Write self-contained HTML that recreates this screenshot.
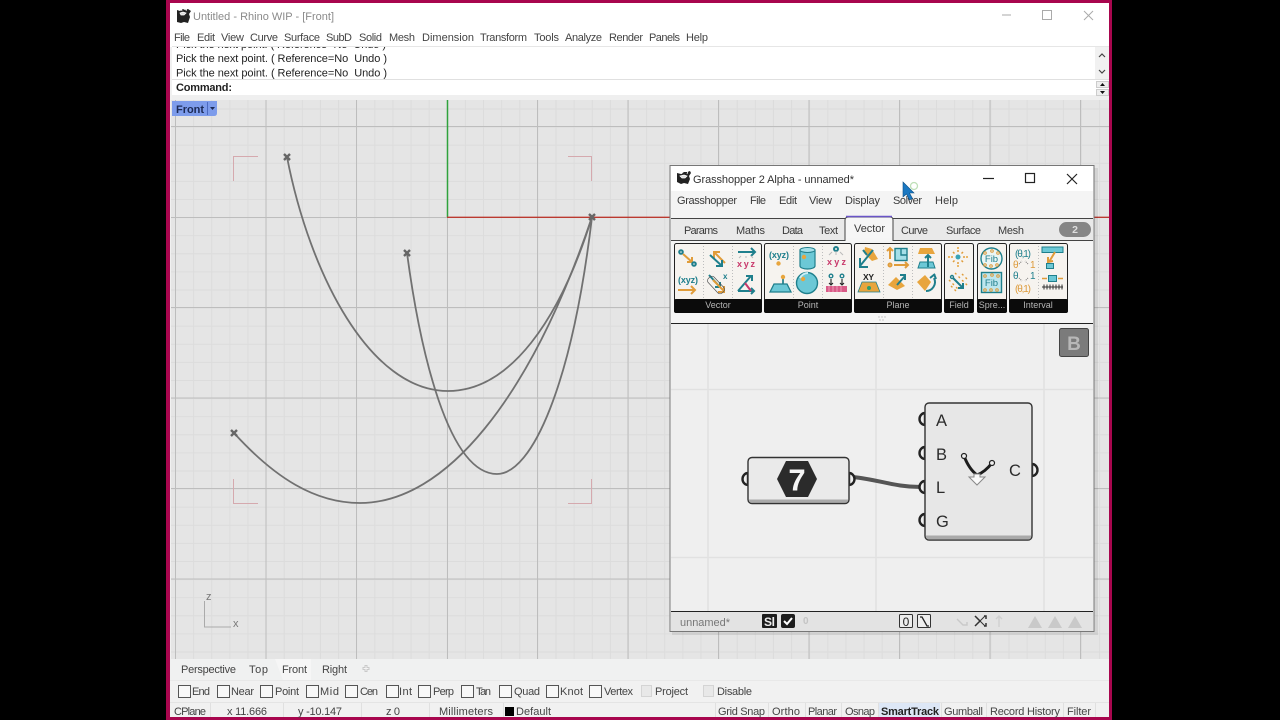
<!DOCTYPE html>
<html><head><meta charset="utf-8"><style>
html,body{margin:0;padding:0;background:#000;width:1280px;height:720px;overflow:hidden}
svg{display:block;position:absolute;left:0;top:0}
svg.root{filter:blur(.3px)}
text{font-family:"Liberation Sans",sans-serif;font-size:11px;fill:#333;white-space:pre}
.g{fill:#8a8a8a}
.m{fill:#444}
.gh{fill:#3a3a3a;font-size:11px}
.w{fill:#b5b5b5;font-size:9px}
.t{fill:#1f7f8c;font-size:9px;font-weight:bold}
.o{fill:#dd9a3a;font-size:9px;font-weight:bold}
.p{fill:#c8376a;font-size:9px;font-weight:bold}
.pin{fill:#efefef;stroke:#222;stroke-width:2.4}
.ct{fill:none;stroke:#1f7f8c;stroke-width:2}
.co{fill:none;stroke:#e09c3a;stroke-width:2}
.cp{fill:none;stroke:#c8376a;stroke-width:2}
.ft{fill:#1f7f8c}.fo{fill:#e8a53d}.fc{fill:#6cc8d6;stroke:#1f7f8c}
.big{font-size:16.500px;fill:#2b2b2b}
</style></head><body>
<svg class="root" width="1280" height="720" viewBox="0 0 1280 720">
<rect width="1280" height="720" fill="#000"/>
<rect x="166" y="0" width="946" height="720" fill="#a8064e"/>
<rect x="170" y="3" width="939" height="714" fill="#f1f1f1"/>
<rect x="170" y="3" width="939" height="44" fill="#fff"/>

<!-- title -->
<path d="M177 10l3 1 3-2 2 1 3-1 3 2-2 3 1 3-2 6-4-1-3 1-4-1z" fill="#222"/>
<path d="M180 13l3-1 3 1-2 2-3 0zM181 8l1 3M187 8l-1 3" stroke="#fff" stroke-width=".8" fill="#ddd"/>
<text class="g" x="193" y="20" textLength="141">Untitled - Rhino WIP - [Front]</text>
<g stroke="#aaa" stroke-width="1" fill="none">
<path d="M1002 15h9"/><rect x="1042.500" y="10.500" width="9" height="9"/><path d="M1084 11l9 9M1093 11l-9 9"/>
</g>
<!-- menu -->
<text class="m" x="174" y="41" textLength="16">File</text>
<text class="m" x="197" y="41" textLength="18">Edit</text>
<text class="m" x="221" y="41" textLength="23">View</text>
<text class="m" x="250" y="41" textLength="28">Curve</text>
<text class="m" x="284" y="41" textLength="36">Surface</text>
<text class="m" x="326" y="41" textLength="26">SubD</text>
<text class="m" x="359" y="41" textLength="23">Solid</text>
<text class="m" x="389" y="41" textLength="26">Mesh</text>
<text class="m" x="422" y="41" textLength="52">Dimension</text>
<text class="m" x="480" y="41" textLength="47">Transform</text>
<text class="m" x="534" y="41" textLength="25">Tools</text>
<text class="m" x="565" y="41" textLength="37">Analyze</text>
<text class="m" x="609" y="41" textLength="34">Render</text>
<text class="m" x="649" y="41" textLength="31">Panels</text>
<text class="m" x="686" y="41" textLength="22">Help</text>
<!-- command -->
<rect x="172" y="47" width="937" height="48" fill="#fff"/>
<rect x="172" y="46" width="937" height="1" fill="#e6e6e6"/>
<svg x="172" y="47" width="920" height="32"><text x="4" y="1" textLength="210" style="fill:#222">Pick the next point. ( Reference=No  Undo )</text></svg>
<text x="176" y="62" textLength="211" style="fill:#222">Pick the next point. ( Reference=No  Undo )</text>
<text x="176" y="76.500" textLength="211" style="fill:#222">Pick the next point. ( Reference=No  Undo )</text>
<rect x="172" y="79" width="937" height="1" fill="#e0e0e0"/>
<text x="176" y="91" textLength="56" style="font-weight:bold;fill:#222">Command:</text>
<rect x="172" y="95" width="937" height="5" fill="#efefef"/>
<rect x="1095" y="47" width="14" height="32" fill="#f1f1f1"/>
<path d="M1099 57l3-3 3 3M1099 70l3 3 3-3" fill="none" stroke="#444" stroke-width="1.200"/>
<rect x="1096.500" y="81.500" width="12" height="6" fill="#eee" stroke="#ccc"/><rect x="1096.500" y="89.500" width="12" height="6" fill="#eee" stroke="#ccc"/>
<path d="M1100 86l2.500-3 2.500 3zM1100 91l2.500 3 2.500-3z" fill="#111"/>

<!-- viewport -->
<rect x="171" y="100" width="938" height="559" fill="#e5e5e5"/>
<defs>
<pattern id="mn" x="175" y="108.500" width="18.120" height="18.100" patternUnits="userSpaceOnUse">
<path d="M0.500 0V18.100M0 .5H18.120" stroke="#dcdcdc" stroke-width="1" fill="none"/>
</pattern>
</defs>
<rect x="171" y="100" width="938" height="559" fill="url(#mn)"/>
<g stroke="#bdbdbd" stroke-width="1">
<path d="M175.500 100V659M266 100V659M356.500 100V659M447.500 100V659M537.500 100V659M628 100V659M718.500 100V659M809 100V659M899.500 100V659M990 100V659M1080.500 100V659"/>
<path d="M171 126.500H1109M171 217.500H1109M171 307.500H1109M171 398H1109M171 488.500H1109M171 579H1109"/>
</g>
<path d="M447.500 100V217" stroke="#2fa23c" stroke-width="1.500"/>
<path d="M447 217.300H1109" stroke="#bb3a30" stroke-width="1.400"/>
<g fill="none" stroke="#d5a9ae" stroke-width="1">
<path d="M258 156.500H233.500V181M568 156.500H591.500V181M258 503.500H233.500V479M568 503.500H591.500V479"/>
</g>
<g fill="none" stroke="#717171" stroke-width="1.800">
<path d="M287 157C310 275 370 391 448 391C510 391 560 320 592 217"/>
<path d="M407 253C420 350 448 474 497 474C532 474 572 385 592 217"/>
<path d="M234 433C275 478 315 503 360 503C445 503 530 400 592 217"/>
</g>
<g stroke="#666" stroke-width="2.400" fill="none">
<path d="M284 154l6 6M290 154l-6 6M404 250l6 6M410 250l-6 6M231 430l6 6M237 430l-6 6M589 214l6 6M595 214l-6 6"/>
</g>
<!-- front tab -->
<path d="M172 101H217V113Q217 116 214 116H172Z" fill="#7d9ceb"/>
<text x="176" y="113" textLength="28" style="font-weight:bold;fill:#1c2a55">Front</text>
<path d="M207.500 102V115" stroke="#4c6ac0"/>
<path d="M210 107h5l-2.500 3z" fill="#1c2a55"/>
<!-- axes -->
<path d="M204.500 601V627H231" fill="none" stroke="#aaa"/>
<text x="206" y="600" style="fill:#777;font-size:11px">z</text>
<text x="233" y="627" style="fill:#777;font-size:11px">x</text>

<!-- bottom bars -->
<rect x="170" y="659" width="939" height="21" fill="#f0f1f1"/>
<path d="M275 659L283 680H311V659Z" fill="#f6f6f6"/>
<text class="m" x="181" y="673" textLength="55">Perspective</text>
<text class="m" x="249" y="673" textLength="19">Top</text>
<text class="m" x="282" y="673" textLength="25">Front</text>
<text class="m" x="322" y="673" textLength="25">Right</text>
<path d="M366 665v7M362.500 668.500h7" stroke="#c9c9c9" stroke-width="3"/>
<path d="M366 666v5M363.500 668.500h5" stroke="#f4f4f4" stroke-width="1"/>
<rect x="170" y="680" width="939" height="1" fill="#e8e8e8"/>
<g fill="#f8f8f8" stroke="#555">
<rect x="178.500" y="685.500" width="12" height="12"/><rect x="217.500" y="685.500" width="12" height="12"/><rect x="260.500" y="685.500" width="12" height="12"/><rect x="306.500" y="685.500" width="12" height="12"/><rect x="345.500" y="685.500" width="12" height="12"/><rect x="386.500" y="685.500" width="12" height="12"/><rect x="418.500" y="685.500" width="12" height="12"/><rect x="461.500" y="685.500" width="12" height="12"/><rect x="499.500" y="685.500" width="12" height="12"/><rect x="546.500" y="685.500" width="12" height="12"/><rect x="589.500" y="685.500" width="12" height="12"/>
</g>
<g fill="#e8e8e8" stroke="#d4d4d4"><rect x="641.500" y="685.500" width="10" height="11"/><rect x="703.500" y="685.500" width="10" height="11"/></g>
<text class="m" x="192" y="695" textLength="18">End</text>
<text class="m" x="231" y="695" textLength="23">Near</text>
<text class="m" x="275" y="695" textLength="24">Point</text>
<text class="m" x="320" y="695" textLength="19">Mid</text>
<text class="m" x="360" y="695" textLength="18">Cen</text>
<text class="m" x="399" y="695" textLength="13">Int</text>
<text class="m" x="433" y="695" textLength="21">Perp</text>
<text class="m" x="476" y="695" textLength="15">Tan</text>
<text class="m" x="514" y="695" textLength="26">Quad</text>
<text class="m" x="560" y="695" textLength="23">Knot</text>
<text class="m" x="604" y="695" textLength="29">Vertex</text>
<text class="m" x="655" y="695" textLength="33">Project</text>
<text class="m" x="717" y="695" textLength="35">Disable</text>
<rect x="170" y="702" width="939" height="1" fill="#e4e4e4"/>
<g stroke="#e0e0e0"><path d="M210.500 703V717M283.500 703V717M361.500 703V717M429.500 703V717M503.500 703V717M715.500 703V717M768.500 703V717M805.500 703V717M841.500 703V717M878.500 703V717M941.500 703V717M986.500 703V717M1063.500 703V717M1095.500 703V717"/></g>
<rect x="879" y="703" width="61" height="14" fill="#dde7f6"/>
<text class="m" x="174" y="715" textLength="32">CPlane</text>
<text class="m" x="227" y="715" textLength="40">x 11.666</text>
<text class="m" x="298" y="715" textLength="44">y -10.147</text>
<text class="m" x="386" y="715" textLength="14">z 0</text>
<text class="m" x="439" y="715" textLength="54">Millimeters</text>
<rect x="505" y="707" width="9" height="9" fill="#000"/>
<text class="m" x="516" y="715" textLength="35">Default</text>
<text class="m" x="718" y="715" textLength="47">Grid Snap</text>
<text class="m" x="772" y="715" textLength="28">Ortho</text>
<text class="m" x="808" y="715" textLength="29">Planar</text>
<text class="m" x="845" y="715" textLength="30">Osnap</text>
<text x="881" y="715" textLength="58" style="font-weight:bold;fill:#222">SmartTrack</text>
<text class="m" x="944" y="715" textLength="39">Gumball</text>
<text class="m" x="990" y="715" textLength="70">Record History</text>
<text class="m" x="1067" y="715" textLength="24">Filter</text>

<!-- GH window -->
<rect x="672" y="168" width="426" height="467" fill="#000" opacity=".08"/>
<rect x="670" y="165.500" width="424" height="466" fill="#f5f5f5" stroke="#777" stroke-width="1"/>
<rect x="671" y="166" width="422" height="25" fill="#fff"/>
<path d="M677 173l4 1 3-2 3 0 3-1 1 2-2 3 1 3-2 5-4-1-3 1-4-2z" fill="#222"/>
<path d="M680 176l4-1 3 1-2 2-3 0zM681 171l1 3M688 171l-1 3" stroke="#fff" stroke-width=".8" fill="#ddd"/>
<text x="693" y="183" textLength="161" style="fill:#333">Grasshopper 2 Alpha - unnamed*</text>
<g stroke="#222" fill="none" stroke-width="1.200"><path d="M983 178.500h11"/><rect x="1025.500" y="173.500" width="9" height="9"/><path d="M1067 174l10 10M1077 174l-10 10"/></g>
<rect x="671" y="191" width="422" height="27" fill="#f4f4f4"/>
<text class="gh" x="677" y="204" textLength="60">Grasshopper</text>
<text class="gh" x="750" y="204" textLength="16">File</text>
<text class="gh" x="779" y="204" textLength="18">Edit</text>
<text class="gh" x="809" y="204" textLength="23">View</text>
<text class="gh" x="845" y="204" textLength="35">Display</text>
<text class="gh" x="893" y="204" textLength="29">Solver</text>
<text class="gh" x="935" y="204" textLength="23">Help</text>
<!-- tabs -->
<rect x="671" y="219" width="422" height="21" fill="#e9e9e9"/>
<path d="M671 218.500H1093M671 240.500H1093" stroke="#444" stroke-width="1"/>
<path d="M845 241V220Q845 217 849 217H890Q893 217 893 220V241" fill="#f6f6f6" stroke="#444"/>
<path d="M846 216.500H892" stroke="#6a55c8" stroke-width="1.400"/>
<rect x="846" y="238" width="46.500" height="4" fill="#f5f5f5"/>
<text class="gh" x="684" y="234" textLength="34">Params</text>
<text class="gh" x="736" y="234" textLength="29">Maths</text>
<text class="gh" x="782" y="234" textLength="21">Data</text>
<text class="gh" x="819" y="234" textLength="19">Text</text>
<text class="gh" x="854" y="232" textLength="31">Vector</text>
<text class="gh" x="901" y="234" textLength="27">Curve</text>
<text class="gh" x="946" y="234" textLength="35">Surface</text>
<text class="gh" x="998" y="234" textLength="26">Mesh</text>
<rect x="1059" y="222" width="32" height="15" rx="7.500" fill="#858585"/>
<text x="1075" y="233" text-anchor="middle" style="fill:#ddd;font-size:10.500px;font-weight:bold">2</text>

<!-- ribbon panels -->
<g fill="#f6f3ef" stroke="#222" stroke-width="1">
<rect x="674.500" y="243.500" width="87" height="69" rx="2"/>
<rect x="764.500" y="243.500" width="87" height="69" rx="2"/>
<rect x="854.500" y="243.500" width="87" height="69" rx="2"/>
<rect x="944.500" y="243.500" width="29" height="69" rx="2"/>
<rect x="977.500" y="243.500" width="29" height="69" rx="2"/>
<rect x="1009.500" y="243.500" width="58" height="69" rx="2"/>
</g>
<g fill="#0b0b0b">
<rect x="674" y="299" width="88" height="14" rx="2"/>
<rect x="764" y="299" width="88" height="14" rx="2"/>
<rect x="854" y="299" width="88" height="14" rx="2"/>
<rect x="944" y="299" width="30" height="14" rx="2"/>
<rect x="977" y="299" width="30" height="14" rx="2"/>
<rect x="1009" y="299" width="59" height="14" rx="2"/>
</g>
<text class="w" x="718" y="308" text-anchor="middle">Vector</text>
<text class="w" x="808" y="308" text-anchor="middle">Point</text>
<text class="w" x="898" y="308" text-anchor="middle">Plane</text>
<text class="w" x="959" y="308" text-anchor="middle">Field</text>
<text class="w" x="992" y="308" text-anchor="middle">Spre...</text>
<text class="w" x="1038" y="308" text-anchor="middle">Interval</text>
<g stroke="#bdbdbd" stroke-dasharray="1 2">
<path d="M703.500 246V298M732.500 246V298M793.500 246V298M822.500 246V298M883.500 246V298M912.500 246V298M1038.500 246V298"/>
</g>
<!-- Vector icons -->
<circle class="ct" cx="681" cy="252" r="1.800"/><path class="co" d="M683 254l9 8M692 257v5h-5"/><circle class="ct" cx="694" cy="264" r="1.800"/>
<path class="co" d="M725 263L714 252M714 258v-6h6"/><path class="ct" d="M710 255l12 11M722 260v6h-6"/>
<path class="ct" d="M738 252h17M751 248l4 4-4 4"/><path d="M741 256l-2 2M746 256v2M751 256l2 2" stroke="#bbb"/><text class="p" x="737" y="267" textLength="18">x y z</text>
<text class="t" x="678" y="283" textLength="20">(xyz)</text><path class="co" d="M678 290h17M691 286l4 4-4 4"/>
<path class="ct" d="M709 275l11 12M720 282v5h-5"/><path class="co" d="M713 280l11 11M724 286v6h-6"/><rect x="712" y="275" width="8" height="20" rx="3" transform="rotate(-43 716 285)" fill="none" stroke="#555" stroke-width=".7"/><text class="t" x="723" y="279" style="font-size:8px">x</text>
<path class="ct" d="M738 291h16M751 288l3 3-3 3M738 291l13-15M746 276h6v5"/><path class="cp" d="M745 283l6 8"/>
<!-- Point icons -->
<text class="t" x="769" y="258" textLength="20">(xyz)</text><circle cx="778.500" cy="263.500" r="2.200" class="fo"/>
<path d="M800 250h15v16a7.500 3 0 0 1-15 0z" fill="#6cc8d6" stroke="#1f7f8c" stroke-width="1.200"/><ellipse cx="807.500" cy="250" rx="7.500" ry="2.500" fill="#a5e0ea" stroke="#1f7f8c"/><circle cx="804" cy="257" r="2.200" class="fo"/>
<circle cx="836" cy="249" r="2" class="ct"/><path d="M836 251v4M832 252l-3 3M840 252l3 3" stroke="#bbb" fill="none"/><text class="p" x="827" y="265" textLength="19">x y z</text>
<path d="M770 292l4-8h13l4 8z" fill="#6cc8d6" stroke="#1f7f8c" stroke-width="1.300"/><path d="M783 284v-6" stroke="#1f7f8c" stroke-width="1.700"/><circle cx="783" cy="277" r="2.200" class="fo"/>
<circle cx="807" cy="283" r="10.500" fill="#6cc8d6" stroke="#1f7f8c" stroke-width="1.400"/><circle cx="803" cy="279" r="2.200" class="fo"/><path d="M800 278a9 9 0 0 1 8-5" stroke="#cdeff4" fill="none" stroke-width="2"/>
<circle cx="831" cy="276" r="1.800" class="ct" style="stroke-width:1.400"/><circle cx="842" cy="276" r="1.800" class="ct" style="stroke-width:1.400"/><path d="M831 279v6M842 279v6M829 283l2 2 2-2M840 283l2 2 2-2" stroke="#222" stroke-width="1.100" fill="none"/><rect x="826" y="286" width="21" height="6" fill="#d95a86"/><path d="M829 286v6M833 286v6M837 286v6M841 286v6" stroke="#f3b6cc" stroke-width=".7"/>
<!-- Plane icons -->
<path d="M865 247l7 2 6 10-6 2-8-8z" fill="#e8a53d"/><path class="ct" d="M873 250l-13 16M860 258v9h8" stroke-width="2.600"/><path class="ct" d="M863 250l4 5"/>
<text x="863" y="280" textLength="11" style="fill:#222;font-size:8.500px;font-weight:bold">XY</text><path d="M858 292l4-10h14l4 10z" class="fo" stroke="#1f7f8c" stroke-width=".8"/><circle cx="869" cy="288" r="2" fill="#2f9d6b"/>
<path class="co" d="M890 259v-11M887 251l3-3 3 3"/><rect x="895" y="248.500" width="12" height="12" fill="#a5dfe8" stroke="#1f7f8c" stroke-width="1.400"/><path d="M901 249v6h6" fill="none" stroke="#1f7f8c" stroke-width="1.400"/><circle cx="890" cy="265" r="1.500" class="co"/><path class="co" d="M894 265h14M905 262l3 3-3 3"/>
<path d="M888 285l8-8 9 9-8 4z" fill="#e8a53d"/><path class="ct" d="M897 285l8-9M900 275h5v5" stroke-width="1.900"/>
<path d="M920 248h12l3 6h-17z" fill="#e8a53d"/><path d="M918 268l2-6h13l2 6z" fill="#6cc8d6" stroke="#1f7f8c"/><path class="ct" d="M928 267v-12M925 258l3-3 3 3"/>
<path d="M917 282l8-7 6 7-6 9z" fill="#e8a53d"/><path class="ct" d="M930 278l5-4M926 291a9 9 0 0 0 8-13" stroke-width="1.700"/><path class="ct" d="M934 274l2 5"/>
<!-- Field -->
<circle cx="958" cy="257" r="2.500" fill="#38a3b8"/><path d="M958 250v2M958 262v2M951 257h2M963 257h2M953 252l1.500 1.500M963 252l-1.500 1.500M953 262l1.500-1.500M963 262l-1.500-1.500" stroke="#e09c3a" stroke-width="1.500"/><g fill="#e8a53d"><circle cx="958" cy="248" r="1"/><circle cx="958" cy="266" r="1"/><circle cx="949" cy="257" r="1"/><circle cx="967" cy="257" r="1"/></g>
<g stroke="#e09c3a" stroke-width="1.400" stroke-dasharray="2 3" fill="none"><path d="M955 273l12 12M962 274l6 6M949 280l10 10M951 286l5 5"/></g><path class="ct" d="M953 278l10 10M963 283v5h-5"/><circle class="ct" cx="952" cy="277" r="1.500" style="stroke-width:1.400"/>
<!-- Spreadsheet -->
<circle cx="991.500" cy="258.500" r="10.500" fill="#eaf5f4" stroke="#1f7f8c" stroke-width="1.400"/><text x="991.500" y="262" text-anchor="middle" style="fill:#1f7f8c;font-size:9.500px">Fib</text>
<rect x="981.500" y="272.500" width="20" height="20" fill="#bde6ee" stroke="#1f7f8c" stroke-width="1.400"/><text x="991.500" y="286" text-anchor="middle" style="fill:#1f7f8c;font-size:9.500px">Fib</text>
<g fill="none" stroke="#dd9a3a" stroke-width="1"><circle cx="985" cy="253" r="1.300"/><circle cx="992" cy="251" r="1.300"/><circle cx="998" cy="253" r="1.300"/><circle cx="985" cy="265" r="1.300"/><circle cx="991" cy="266" r="1.300"/><circle cx="997" cy="265" r="1.300"/><circle cx="985" cy="276" r="1.300"/><circle cx="992" cy="275" r="1.300"/><circle cx="998" cy="276" r="1.300"/><circle cx="985" cy="290" r="1.300"/><circle cx="991" cy="290" r="1.300"/><circle cx="997" cy="290" r="1.300"/></g>
<!-- Interval -->
<text x="1015" y="257" textLength="16" style="fill:#1f7f8c;font-size:10px">(θ,1)</text><text class="o" x="1013" y="268" style="font-size:10px;font-weight:normal">θ</text><text class="o" x="1030" y="268" style="font-size:10px;font-weight:normal">1</text>
<path d="M1019 264l3-3M1028 264l-3-3" stroke="#777" fill="none" stroke-dasharray="1 1"/>
<text class="t" x="1013" y="279" style="font-size:10px;font-weight:normal">θ</text><text class="t" x="1030" y="279" style="font-size:10px;font-weight:normal">1</text>
<path d="M1019 278l3 3M1028 278l-3 3" stroke="#777" fill="none" stroke-dasharray="1 1"/>
<text x="1015" y="292" textLength="16" style="fill:#dd9a3a;font-size:10px">(θ,1)</text>
<rect x="1042" y="247" width="21" height="5.500" class="fc"/><path class="co" d="M1055 252l-6 10M1048 257l0 5 5-1"/><rect x="1046.500" y="263.500" width="7" height="5" class="fc"/>
<rect x="1048.500" y="275.500" width="8" height="6" class="fc"/><path d="M1042 278.500h5M1058 278.500h5" stroke="#e09c3a" stroke-width="1.500"/><path d="M1042 287h21M1044 284.500v5M1047 284.500v5M1050 284.500v5M1053 284.500v5M1056 284.500v5M1059 284.500v5M1062 284.500v5" stroke="#333" stroke-width="1"/>
<g fill="#bbb"><circle cx="879" cy="317" r=".7"/><circle cx="882" cy="317" r=".7"/><circle cx="885" cy="317" r=".7"/><circle cx="880" cy="320" r=".7"/><circle cx="883" cy="320" r=".7"/></g>

<!-- canvas -->
<rect x="671" y="324" width="422" height="287" fill="#efefef"/>
<path d="M671 323.500H1093M671 611.500H1093" stroke="#222" stroke-width="1"/>
<path d="M708 324V611M876 324V611M1044 324V611M671 389.500H1093M671 557.500H1093" stroke="#e1e1e1" stroke-width="1.500"/>
<rect x="1059.500" y="328.500" width="29" height="28" rx="2" fill="#7b7b7b" stroke="#444"/>
<text x="1074" y="350" text-anchor="middle" style="fill:#b8b8b8;font-size:19px;font-weight:bold">B</text>

<path d="M853 477C880 480 895 487 921 487" fill="none" stroke="#555" stroke-width="4"/>
<!-- pins -->
<path class="pin" d="M748 473a5.500 6 0 1 0 0 12z"/>
<path class="pin" d="M849 473a5.500 6 0 1 1 0 12z"/>
<path class="pin" d="M925 413a5.500 6 0 1 0 0 12zM925 447a5.500 6 0 1 0 0 12zM925 481a5.500 6 0 1 0 0 12zM925 514a5.500 6 0 1 0 0 12z"/>
<path class="pin" d="M1032 464a5.500 6 0 1 1 0 12z"/>
<!-- number node -->
<rect x="748" y="457.500" width="101" height="46" rx="4" fill="#eaeaea" stroke="#333" stroke-width="1.400"/>
<path d="M749 499.500H848V500Q848 502.500 845 502.500H753Q749 502.500 749 500Z" fill="#a9a9a9"/>
<path d="M777 479l9-18h22l9 18-9 18h-22z" fill="#2b2b2b"/>
<text x="797" y="490.500" text-anchor="middle" style="font-size:31px;font-weight:bold;fill:#f5f5f5">7</text>
<!-- component -->
<rect x="925" y="403" width="107" height="137" rx="4" fill="#e7e7e7" stroke="#333" stroke-width="1.400"/>
<path d="M926 535.500H1031V537Q1031 539.500 1028 539.500H930Q926 539.500 926 537Z" fill="#a9a9a9"/>
<text class="big" x="936" y="426">A</text>
<text class="big" x="936" y="460">B</text>
<text class="big" x="936" y="493">L</text>
<text class="big" x="936" y="527">G</text>
<text class="big" x="1009" y="476">C</text>
<path d="M964 456Q969 469 977 475Q985 472 992 463" fill="none" stroke="#1d1d1d" stroke-width="3"/>
<circle cx="964" cy="456" r="2.500" fill="#eee" stroke="#222" stroke-width="1.200"/>
<circle cx="992" cy="463" r="2.500" fill="#eee" stroke="#222" stroke-width="1.200"/>
<path d="M974 474h6v3h5l-8 8-8-8h5z" fill="#fafafa" stroke="#888" stroke-width="1"/>

<!-- GH status -->
<rect x="671" y="612" width="422" height="19" fill="#e3e3e3"/>
<text x="680" y="626" textLength="50" style="fill:#777;font-size:11px">unnamed*</text>
<rect x="762" y="614" width="15" height="14" rx="1" fill="#1d1d1d"/>
<text x="764" y="626" textLength="11" style="fill:#eee;font-size:12px;font-weight:bold">Sl</text>
<rect x="781" y="614" width="14" height="14" rx="2" fill="#1d1d1d"/>
<path d="M784 621l3 3 5-6" fill="none" stroke="#fff" stroke-width="2"/>
<text x="803" y="624" style="fill:#c4c4c4;font-size:10px;font-weight:bold">0</text>
<rect x="899.500" y="614.500" width="13" height="13" rx="1" fill="#eee" stroke="#333"/>
<text x="906" y="626" text-anchor="middle" style="fill:#222;font-size:12px">0</text>
<rect x="917.500" y="614.500" width="13" height="13" rx="1" fill="#eee" stroke="#333"/>
<path d="M920 617h2l5 9h2" fill="none" stroke="#222" stroke-width="1.300"/>
<path d="M957 619l6 6h4M967 622v3h-3" fill="none" stroke="#c9c9c9" stroke-width="1.400"/>
<path d="M975 616l5 5-5 5M984 616h2v3M984 626h2v-3" fill="none" stroke="#333" stroke-width="1.500"/><path d="M980 621l5-5M980 621l5 5" stroke="#333"/>
<path d="M999 627v-11M996 619l3-3 3 3" fill="none" stroke="#d0d0d0" stroke-width="1.400"/>
<path d="M1028 628l7-12 7 12zM1048 628l7-12 7 12zM1068 628l7-12 7 12z" fill="#c9c9c9"/>

<!-- cursor -->
<circle cx="914" cy="186" r="3.500" fill="none" stroke="#bfe0b8" stroke-width="1.300"/>
<path d="M903 182v15l3.500-3 3 6 3-1.500-3-5.500h4.500z" fill="#1a78c2" stroke="#0d4f85" stroke-width=".6"/>
</svg>
</body></html>
